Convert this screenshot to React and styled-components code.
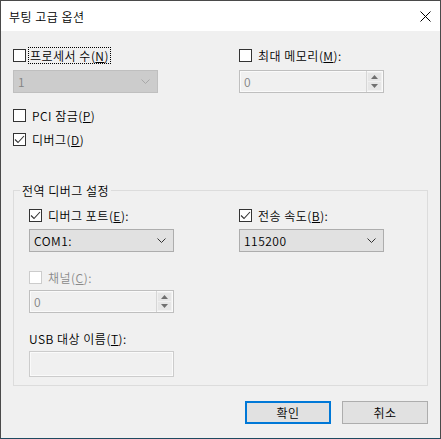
import styled, { createGlobalStyle } from "styled-components";

const GlobalStyle = createGlobalStyle`
  html, body {
    margin: 0;
    padding: 0;
    background: #f0f0f0;
  }
  body {
    font-family: "Noto Sans CJK KR", "Noto Sans", sans-serif;
    font-size: 12px;
    font-weight: 350;
    letter-spacing: 0.5px;
    color: #000;
  }
`;

function CheckBox({ checked, disabled, label, focus }) {
    return (
        <CheckRow $disabled={disabled}>
            <Box $disabled={disabled}>
                {checked && (
                    <svg width="11" height="11" viewBox="0 0 11 11">
                        <polyline points="1,5.5 4,8.5 10,2" fill="none" stroke="#333" strokeWidth="1.1" />
                    </svg>
                )}
            </Box>
            <CheckLabel $focus={focus}>{label}</CheckLabel>
        </CheckRow>
    );
}

function Combo({ value, disabled, width = 145 }) {
    return (
        <ComboBox $disabled={disabled} style={{ width }}>
            <span>{value}</span>
            <svg width="9" height="5" viewBox="0 0 9 5">
                <polyline points="0.5,0.5 4.5,4.5 8.5,0.5" fill="none" stroke={disabled ? "#a8a8a8" : "#333"} strokeWidth="1" />
            </svg>
        </ComboBox>
    );
}

function Spin({ value }) {
    return (
        <SpinBox>
            <span>{value}</span>
            <SpinButtons>
                <SpinBtn>
                    <svg width="7" height="4" viewBox="0 0 7 4"><polygon points="0,4 3.5,0 7,4" fill="#707070" /></svg>
                </SpinBtn>
                <SpinBtn>
                    <svg width="7" height="4" viewBox="0 0 7 4"><polygon points="0,0 3.5,4 7,0" fill="#707070" /></svg>
                </SpinBtn>
            </SpinButtons>
        </SpinBox>
    );
}

export default function App() {
    return (
        <>
            <GlobalStyle />
            <Window>
                <TitleBar>
                    <span>부팅 고급 옵션</span>
                    <svg width="11" height="11" viewBox="0 0 11 11">
                        <path d="M0.5 0.5 L10.5 10.5 M10.5 0.5 L0.5 10.5" stroke="#000" strokeWidth="1" />
                    </svg>
                </TitleBar>
                <Body>
                    <TopGrid>
                        <CheckBox focus label={<>프로세서 수(<u>N</u>)</>} />
                        <CheckBox label={<>최대 메모리(<u>M</u>):</>} />
                        <Combo value="1" disabled />
                        <Spin value="0" />
                    </TopGrid>
                    <Stack>
                        <CheckBox label={<>PCI 잠금(<u>P</u>)</>} />
                        <CheckBox checked label={<>디버그(<u>D</u>)</>} />
                    </Stack>
                    <Group>
                        <legend>전역 디버그 설정</legend>
                        <GroupGrid>
                            <CheckBox checked label={<>디버그 포트(<u>E</u>):</>} />
                            <CheckBox checked label={<>전송 속도(<u>B</u>):</>} />
                            <Combo value="COM1:" />
                            <Combo value="115200" />
                        </GroupGrid>
                        <Field>
                            <CheckBox disabled label={<>채널(<u>C</u>):</>} />
                            <Spin value="0" />
                        </Field>
                        <Field $gap={4}>
                            <FieldLabel>USB 대상 이름(<u>T</u>):</FieldLabel>
                            <TextBox />
                        </Field>
                    </Group>
                    <Buttons>
                        <Button $primary>확인</Button>
                        <Button>취소</Button>
                    </Buttons>
                </Body>
            </Window>
        </>
    );
}

const Window = styled.div`
    width: 441px;
    height: 439px;
    box-sizing: border-box;
    border: 1px solid #4a4a4a;
    border-bottom-color: #1f4a60;
    background: #f0f0f0;
    display: flex;
    flex-direction: column;
`;

const TitleBar = styled.div`
    height: 30px;
    flex-shrink: 0;
    background: #fff;
    display: flex;
    align-items: center;
    justify-content: space-between;
    padding: 0 9px 0 8px;

    span {
        font-size: 12px;
        line-height: 17px;
    }
`;

const Body = styled.div`
    display: flex;
    flex-direction: column;
    padding: 16px 12px 0 12px;
`;

const TopGrid = styled.div`
    display: grid;
    grid-template-columns: 226px 145px;
    row-gap: 6px;
`;

const Stack = styled.div`
    display: flex;
    flex-direction: column;
    gap: 7px;
    margin-top: 14px;
`;

const CheckRow = styled.div`
    display: flex;
    align-items: center;
    height: 17px;
    color: ${p => (p.$disabled ? "#8a8a8a" : "#000")};
`;

const Box = styled.div`
    width: 11px;
    height: 11px;
    border: 1px solid ${p => (p.$disabled ? "#cccccc" : "#333333")};
    background: #fff;
    display: flex;
    flex-shrink: 0;
`;

const CheckLabel = styled.span`
    margin-left: ${p => (p.$focus ? "2px" : "4px")};
    line-height: 15px;
    padding: 0 1px;
    border: 1px dotted ${p => (p.$focus ? "#000" : "transparent")};
    white-space: nowrap;
`;

const ComboBox = styled.div`
    height: 23px;
    box-sizing: border-box;
    border: 1px solid ${p => (p.$disabled ? "#bfbfbf" : "#adadad")};
    background: ${p => (p.$disabled ? "#cccccc" : "#e1e1e1")};
    color: ${p => (p.$disabled ? "#838383" : "#000")};
    display: flex;
    align-items: center;
    justify-content: space-between;
    padding: 0 7px 0 4px;
`;

const SpinBox = styled.div`
    width: 145px;
    height: 23px;
    box-sizing: border-box;
    border: 1px solid #bfbfbf;
    box-shadow: inset 0 0 0 1px #fafafa;
    background: #f0f0f0;
    color: #838383;
    display: flex;
    align-items: center;
    justify-content: space-between;
    padding-left: 4px;
`;

const SpinButtons = styled.div`
    width: 17px;
    height: 100%;
    box-sizing: border-box;
    border-left: 1px solid #d6d6d6;
    display: flex;
    flex-direction: column;
    padding: 2px 2px 2px 1px;
    gap: 1px;
`;

const SpinBtn = styled.div`
    flex: 1;
    background: #e6e6e6;
    display: flex;
    align-items: center;
    justify-content: center;
`;

const Group = styled.fieldset`
    margin: 34px 0 0 0;
    width: 415px;
    box-sizing: border-box;
    min-width: 0;
    border: 1px solid #dcdcdc;
    padding: 8px 0 8px 15px;

    legend {
        margin-left: -9px;
        padding: 0 2px;
        line-height: 17px;
    }
`;

const GroupGrid = styled.div`
    display: grid;
    grid-template-columns: 210px 145px;
    row-gap: 5px;
`;

const Field = styled.div`
    display: flex;
    flex-direction: column;
    gap: ${p => p.$gap || 4}px;
    margin-top: 17px;
    width: 145px;
`;

const FieldLabel = styled.div`
    line-height: 17px;
    white-space: nowrap;
`;

const TextBox = styled.div`
    height: 26px;
    box-sizing: border-box;
    border: 1px solid #cccccc;
    box-shadow: inset 0 0 0 1px #fafafa;
    background: #f0f0f0;
`;

const Buttons = styled.div`
    display: flex;
    justify-content: flex-end;
    gap: 11px;
    margin-top: 15px;
    padding-right: 0;
    width: 415px;
`;

const Button = styled.div`
    width: 86px;
    height: 23px;
    box-sizing: border-box;
    border: ${p => (p.$primary ? "2px solid #0078d7" : "1px solid #adadad")};
    background: #e1e1e1;
    display: flex;
    align-items: center;
    justify-content: center;
    line-height: 17px;
`;
